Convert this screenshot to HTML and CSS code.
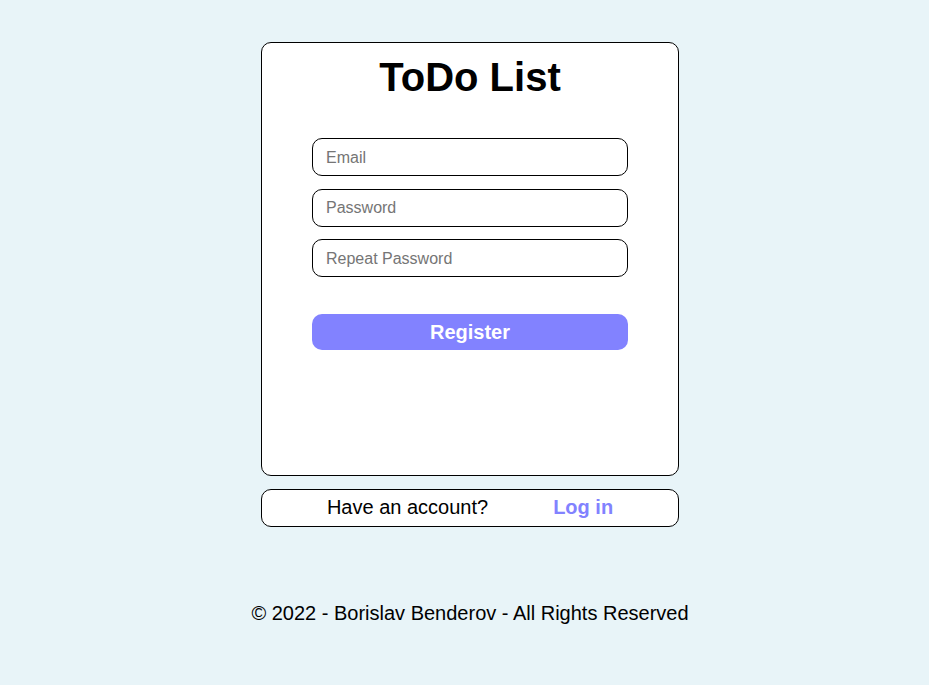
FILE: index.html
```html
<!DOCTYPE html>
<html lang="en">
<head>
<meta charset="utf-8">
<title>ToDo List - Register</title>
<link rel="stylesheet" href="styles.css">
</head>
<body>
<main class="page">
  <section class="card">
    <h1 class="title">ToDo List</h1>
    <form class="form">
      <input class="field" type="email" placeholder="Email">
      <input class="field" type="password" placeholder="Password">
      <input class="field" type="password" placeholder="Repeat Password">
      <button class="btn" type="button">Register</button>
    </form>
  </section>
  <section class="switch">
    <span class="switch-text">Have an account?</span>
    <a class="switch-link" href="#">Log in</a>
  </section>
  <footer class="footer">© 2022 - Borislav Benderov - All Rights Reserved</footer>
</main>
</body>
</html>
```

FILE: styles.css
```css
html, body {
  margin: 0;
  padding: 0;
}

body {
  background: #e8f4f8;
  font-family: "Liberation Sans", Arial, sans-serif;
  color: #000;
}

.page {
  display: flex;
  flex-direction: column;
  align-items: center;
  padding-top: 42px;
  padding-left: 11px;
}

.card {
  box-sizing: border-box;
  width: 418px;
  height: 434px;
  background: #fff;
  border: 1px solid #000;
  border-radius: 10px;
  display: flex;
  flex-direction: column;
  align-items: center;
}

.title {
  margin: 11px 0 0;
  font-size: 40px;
  font-weight: bold;
  line-height: 46px;
}

.form {
  margin-top: 38px;
  display: flex;
  flex-direction: column;
  width: 316px;
}

.field {
  box-sizing: border-box;
  width: 316px;
  height: 38px;
  margin: 0 0 12.5px;
  padding: 1px 13px 0;
  border: 1px solid #000;
  border-radius: 10px;
  font-family: "Liberation Sans", Arial, sans-serif;
  font-size: 16px;
  background: #fff;
  outline: none;
}

.field::placeholder {
  color: #757575;
}

.btn {
  box-sizing: border-box;
  margin-top: 24px;
  width: 316px;
  height: 36px;
  border: none;
  border-radius: 10px;
  background: #8282ff;
  color: #fff;
  font-family: "Liberation Sans", Arial, sans-serif;
  font-size: 20px;
  font-weight: bold;
  padding: 2px 0 0;
}

.switch {
  box-sizing: border-box;
  margin-top: 13px;
  width: 418px;
  height: 38px;
  background: #fff;
  border: 1px solid #000;
  border-radius: 10px;
  display: flex;
  align-items: center;
  justify-content: center;
  gap: 65px;
  font-size: 20px;
  padding-bottom: 1px;
}

.switch-link {
  color: #8282ff;
  font-weight: bold;
  text-decoration: none;
}

.footer {
  margin-top: 75px;
  font-size: 20px;
  line-height: 23px;
}
```
